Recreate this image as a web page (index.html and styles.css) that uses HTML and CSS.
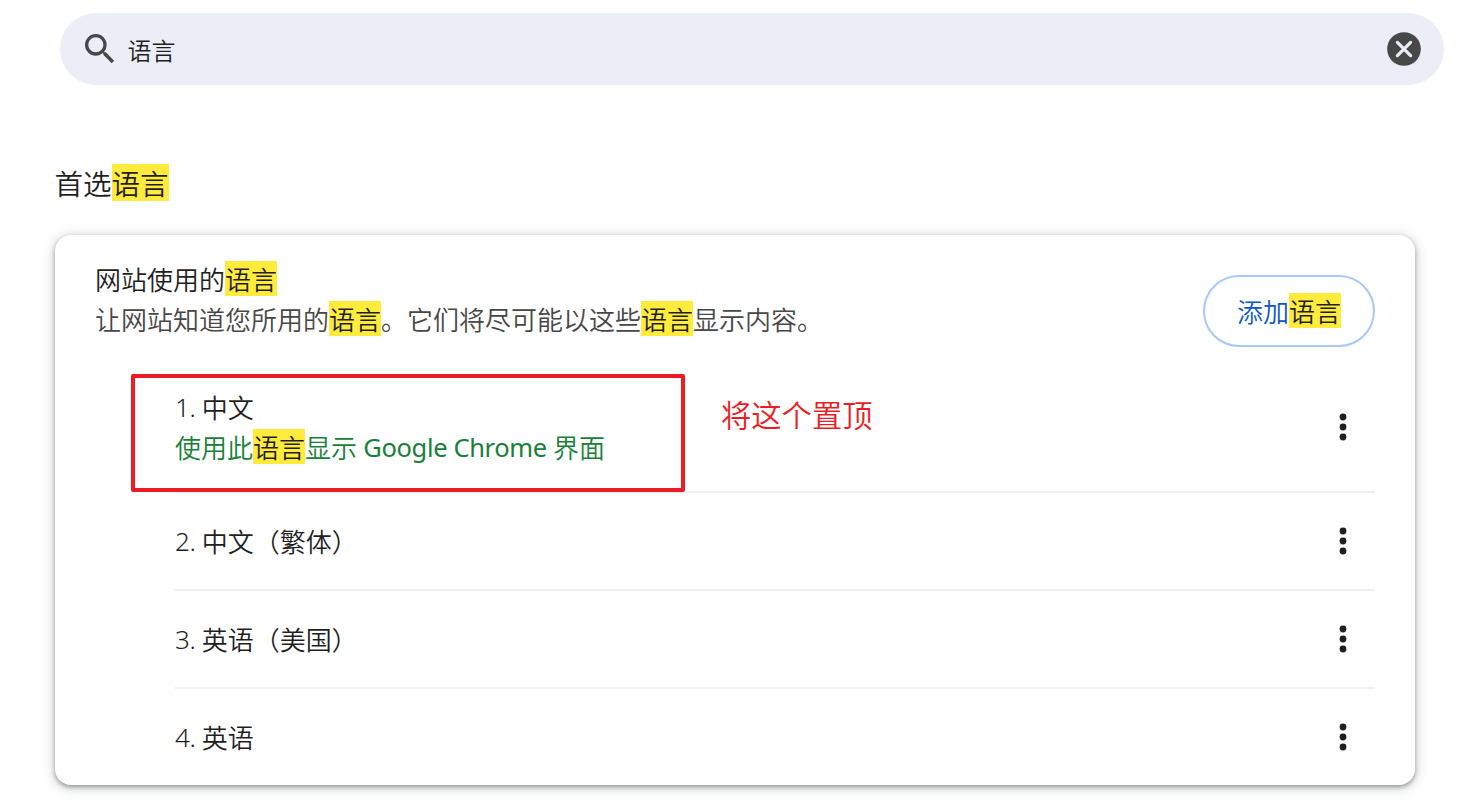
FILE: index.html
```html
<!DOCTYPE html>
<html lang="zh-CN">
<head>
<meta charset="utf-8">
<title>语言</title>
<link rel="stylesheet" href="styles.css">
</head>
<body>
<div class="search">
  <svg class="search-icon" viewBox="0 0 24 24"><path d="M15.5 14h-.79l-.28-.27A6.471 6.471 0 0 0 16 9.5 6.5 6.5 0 1 0 9.5 16c1.61 0 3.09-.59 4.23-1.57l.27.28v.79l5 4.99L20.49 19l-4.99-5zm-6 0C7.01 14 5 11.99 5 9.5S7.01 5 9.5 5 14 7.01 14 9.5 11.99 14 9.5 14z"/></svg>
  <span class="query">语言</span>
  <svg class="clear-icon" viewBox="0 0 34 34"><circle cx="17" cy="17" r="16.8"/><path d="M10.4 10.4l13.2 13.2M23.6 10.4l-13.2 13.2"/></svg>
</div>
<h1 class="title">首选<mark>语言</mark></h1>
<main class="card">
  <header class="card-head">
    <div class="intro">
      <div class="line">网站使用的<mark>语言</mark></div>
      <div class="line muted">让网站知道您所用的<mark>语言</mark>。它们将尽可能以这些<mark>语言</mark>显示内容。</div>
    </div>
    <button class="add">添加<mark>语言</mark></button>
  </header>
  <div class="list">
    <div class="row first">
      <div>
        <div class="line"><span class="num">1. </span>中文</div>
        <div class="line active">使用此<mark>语言</mark>显示<span class="latin"> Google Chrome </span>界面</div>
      </div>
      <svg class="dots" viewBox="0 0 8 28"><circle cx="4" cy="4" r="3.4"/><circle cx="4" cy="14" r="3.4"/><circle cx="4" cy="24" r="3.4"/></svg>
      <div class="frame"></div>
      <div class="note">将这个置顶</div>
    </div>
    <div class="row">
      <div class="line"><span class="num">2. </span>中文（繁体）</div>
      <svg class="dots" viewBox="0 0 8 28"><circle cx="4" cy="4" r="3.4"/><circle cx="4" cy="14" r="3.4"/><circle cx="4" cy="24" r="3.4"/></svg>
    </div>
    <div class="row">
      <div class="line"><span class="num">3. </span>英语（美国）</div>
      <svg class="dots" viewBox="0 0 8 28"><circle cx="4" cy="4" r="3.4"/><circle cx="4" cy="14" r="3.4"/><circle cx="4" cy="24" r="3.4"/></svg>
    </div>
    <div class="row">
      <div class="line"><span class="num">4. </span>英语</div>
      <svg class="dots" viewBox="0 0 8 28"><circle cx="4" cy="4" r="3.4"/><circle cx="4" cy="14" r="3.4"/><circle cx="4" cy="24" r="3.4"/></svg>
    </div>
  </div>
</main>
</body>
</html>
```

FILE: styles.css
```css
* { box-sizing: border-box; }
body {
  margin: 0;
  padding: 13px 0 0;
  height: 802px;
  overflow: hidden;
  background: #fff;
  color: #1f1f1f;
  font: 350 26px/40px "Noto Sans CJK SC", sans-serif;
}
.search {
  display: flex;
  align-items: center;
  width: 1384px;
  height: 72px;
  margin-left: 60px;
  padding: 0 23px 0 20px;
  border-radius: 36px;
  background: #ebeef7;
}
.search-icon { width: 40px; height: 40px; fill: #474747; }
.query { flex: 1; margin-left: 7.5px; font-size: 24px; padding-top: 1px; }
.clear-icon { width: 34px; height: 34px; fill: #474747; stroke-width: 3.2; stroke-linecap: round; }
.clear-icon path { stroke: #ebeef7; }
mark {
  display: inline-block;
  height: 35px;
  line-height: 35px;
  background: #ffeb3b;
  color: #1f1f1f;
  vertical-align: top;
  margin-top: 2px;
}
.title {
  margin: 78px 0 0 54.5px;
  height: 40px;
  font-size: 28.5px;
  font-weight: 350;
  line-height: 40px;
}
.title mark { height: 37px; line-height: 38px; margin-top: 1px; }
.card {
  width: 1360px;
  height: 550px;
  margin: 32px 0 0 55px;
  padding: 24px 40px 0;
  border-radius: 16px;
  background: #fff;
  box-shadow: 0 2px 4px rgba(60, 64, 67, .45), 0 2px 12px 2px rgba(60, 64, 67, .2);
}
.card-head { display: flex; justify-content: space-between; height: 110px; }
.line { height: 40px; white-space: nowrap; }
.muted { color: #474747; }
.add {
  width: 172px;
  height: 72px;
  margin-top: 16px;
  padding: 0;
  border: 2px solid #a8c7fa;
  border-radius: 36px;
  background: #fff;
  color: #0b57d0;
  font: inherit;
}
.list { padding-left: 80px; }
.row {
  position: relative;
  display: flex;
  align-items: center;
  justify-content: space-between;
  height: 98px;
  padding-bottom: 1px;
  border-bottom: 2px solid #f0f0f0;
}
.row:last-child { border-bottom: 0; height: 96px; padding-bottom: 0; }
.row.first { height: 124px; padding-bottom: 6px; }
.dots { width: 8px; height: 28px; margin-right: 28px; fill: #1f1f1f; }
.num, .latin {
  font-family: "Noto Sans", sans-serif;
  line-height: 1;
  vertical-align: 1px;
  white-space: pre;
}
.num { font-weight: 300; letter-spacing: -.4px; }
.latin { font-size: 25.5px; font-weight: 400; letter-spacing: -.37px; }
.active { color: #188038; }
.frame {
  position: absolute;
  left: -44px;
  top: 5px;
  width: 554px;
  height: 118px;
  border: 4px solid #ed1c24;
  border-radius: 2px;
}
.note {
  position: absolute;
  left: 546px;
  top: 25px;
  color: #ed1c24;
  font-size: 30.3px;
  font-weight: 350;
}
```
